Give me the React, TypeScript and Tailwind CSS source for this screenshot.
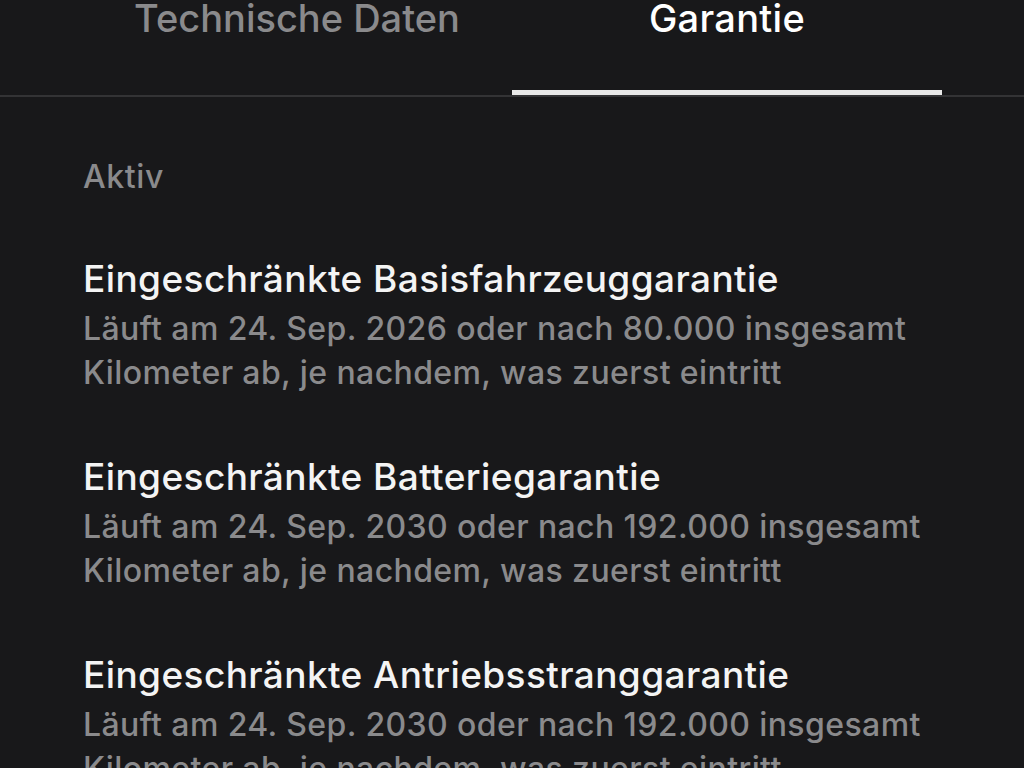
import React from 'react';

const warranties = [
  {
    title: 'Eingeschränkte Basisfahrzeuggarantie',
    lines: ['Läuft am 24. Sep. 2026 oder nach 80.000 insgesamt', 'Kilometer ab, je nachdem, was zuerst eintritt'],
  },
  {
    title: 'Eingeschränkte Batteriegarantie',
    lines: ['Läuft am 24. Sep. 2030 oder nach 192.000 insgesamt', 'Kilometer ab, je nachdem, was zuerst eintritt'],
  },
  {
    title: 'Eingeschränkte Antriebsstranggarantie',
    lines: ['Läuft am 24. Sep. 2030 oder nach 192.000 insgesamt', 'Kilometer ab, je nachdem, was zuerst eintritt'],
  },
];

const App: React.FC = () => {
  return (
    <div
      className="h-[768px] w-[1024px] overflow-hidden bg-[#18181a] font-medium"
      style={{ fontFamily: 'Inter, "Noto Sans", sans-serif' }}
    >
      {/* Tabs */}
      <div className="border-b-2 border-[#333335]">
        <div className="flex pl-[82px]">
          <div className="flex h-[95px] w-[430px] justify-center">
            <span className="-mt-[6px] text-[38px] leading-[48px] text-[#8a8a8c]">Technische Daten</span>
          </div>
          <div className="flex h-[95px] w-[430px] flex-col items-center justify-between">
            <span className="-mt-[6px] text-[38px] leading-[48px] tracking-[0.3px] text-white">Garantie</span>
            <div className="h-[5px] w-full bg-[#e8e8e8]" />
          </div>
        </div>
      </div>

      {/* Content */}
      <div className="pl-[83px] pt-[60px]">
        <div className="text-[32px] leading-[40px] tracking-[0.6px] text-[#8a8a8c]">Aktiv</div>
        <div className="mt-[60px] flex flex-col gap-[60px]">
          {warranties.map((w) => (
            <div key={w.title}>
              <div className="text-[37px] leading-[44px] tracking-[0.4px] text-[#f4f4f4]">{w.title}</div>
              <div className="mt-[6px] text-[32px] leading-[44px] tracking-[0.4px] text-[#8a8a8c]">
                {w.lines.map((l) => (
                  <div key={l}>{l}</div>
                ))}
              </div>
            </div>
          ))}
        </div>
      </div>
    </div>
  );
};

export default App;
